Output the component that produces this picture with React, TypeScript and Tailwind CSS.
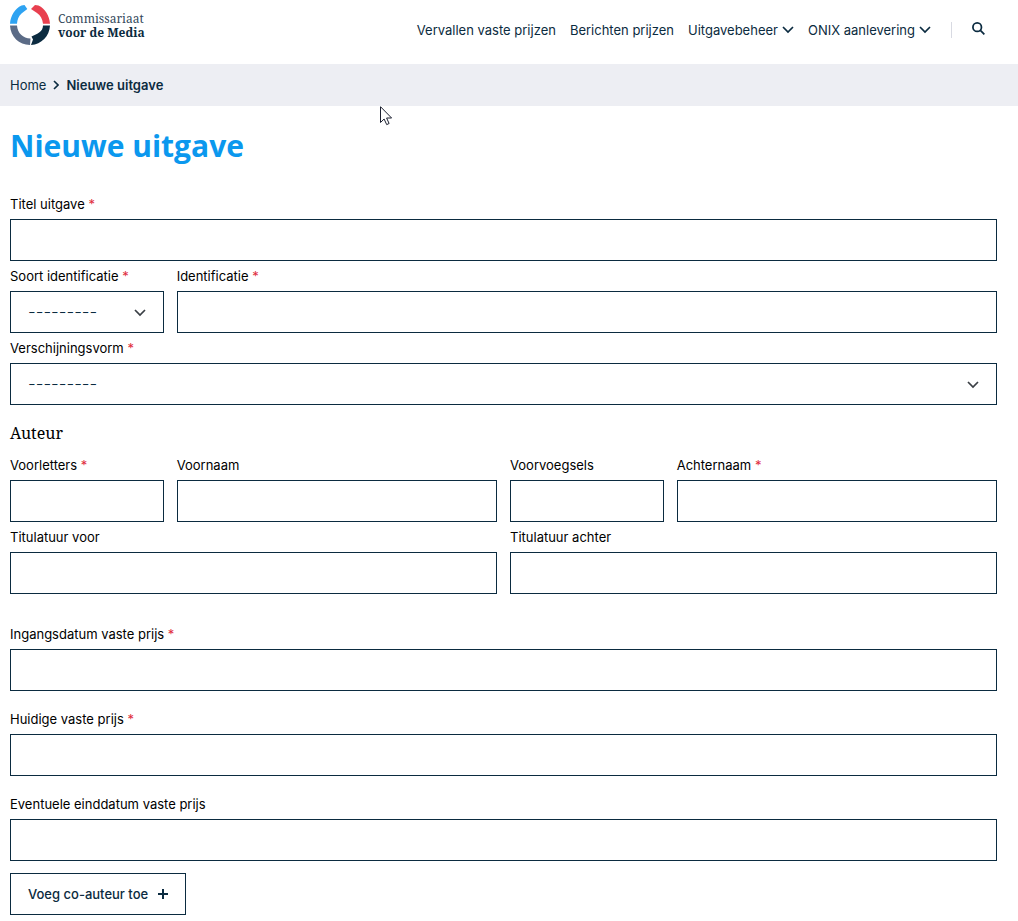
import type { ReactNode } from "react";

const controlClass =
  "block h-[42px] w-full appearance-none rounded-none border border-[#0b2b40] bg-white px-[17px] text-[#0b2b40] outline-none";

export default function App() {
  return (
    <div className="bg-white font-['Inter',sans-serif] text-[13px] leading-5 text-[#0b2b40]">
      <SiteHeader />
      <nav aria-label="Kruimelpad" className="flex h-[42px] items-center gap-[7px] bg-[#edeef3] px-[10px]">
        <a href="#home">Home</a>
        <svg width="6" height="10" viewBox="0 0 6 10" fill="none" stroke="currentColor" strokeWidth="1.6" aria-hidden="true">
          <path d="M1 1l4 4-4 4" />
        </svg>
        <span className="font-semibold" aria-current="page">
          Nieuwe uitgave
        </span>
      </nav>

      <main className="pr-[21px] pb-[6px] pl-[10px]">
        <h1 className="pt-5 font-['Open_Sans',sans-serif] text-[30px] leading-10 font-bold text-[#0b98ee]">
          Nieuwe uitgave
        </h1>

        <form className="pt-[23px]" onSubmit={(e) => e.preventDefault()}>
          <div className="grid grid-cols-6 gap-x-[13px]">
            <TextField id="titel" label="Titel uitgave" required className="col-span-6" />
            <SelectField id="soort" label="Soort identificatie" required className="col-span-1" />
            <TextField id="identificatie" label="Identificatie" required className="col-span-5" />
            <SelectField id="vorm" label="Verschijningsvorm" required className="col-span-6" />
          </div>

          <fieldset>
            <legend className="pt-4 pb-[5px] font-['Noto_Serif','DejaVu_Serif',serif] text-base leading-6 text-black">
              Auteur
            </legend>
            <div className="grid grid-cols-6 gap-x-[13px]">
              <TextField id="voorletters" label="Voorletters" required className="col-span-1" />
              <TextField id="voornaam" label="Voornaam" className="col-span-2" />
              <TextField id="voorvoegsels" label="Voorvoegsels" className="col-span-1" />
              <TextField id="achternaam" label="Achternaam" required className="col-span-2" />
              <TextField id="titulatuur-voor" label="Titulatuur voor" className="col-span-3" />
              <TextField id="titulatuur-achter" label="Titulatuur achter" className="col-span-3" />
            </div>
          </fieldset>

          <div className="flex flex-col gap-[13px] pt-[25px]">
            <TextField id="ingangsdatum" label="Ingangsdatum vaste prijs" required />
            <TextField id="prijs" label="Huidige vaste prijs" required />
            <TextField id="einddatum" label="Eventuele einddatum vaste prijs" />
          </div>

          <button
            type="button"
            className="mt-3 flex h-[42px] items-center gap-[10px] border border-[#0b2b40] px-[17px] font-medium"
          >
            Voeg co-auteur toe
            <svg width="10" height="10" viewBox="0 0 10 10" stroke="currentColor" strokeWidth="2" aria-hidden="true">
              <path d="M5 0v10M0 5h10" />
            </svg>
          </button>
        </form>
      </main>
      <Pointer />
    </div>
  );
}

function SiteHeader() {
  return (
    <header className="flex h-16 items-start justify-between pr-[33px] pl-[10px]">
      <a href="#home" className="flex items-center gap-2 pt-[5px]">
        <Logo />
        <span className="flex flex-col pt-px font-['Noto_Serif','DejaVu_Serif',serif] text-[12px] leading-[14px]">
          <span className="text-[#33495b]">Commissariaat</span>
          <b>voor de Media</b>
        </span>
      </a>
      <div className="flex items-center pt-5">
        <nav aria-label="Hoofdmenu" className="flex items-center gap-[14px]">
          <a href="#vervallen">Vervallen vaste prijzen</a>
          <a href="#berichten">Berichten prijzen</a>
          <a href="#beheer" className="flex items-center gap-1">
            Uitgavebeheer <Chevron />
          </a>
          <a href="#onix" className="flex items-center gap-1">
            ONIX aanlevering <Chevron />
          </a>
        </nav>
        <span className="ml-5 h-4 w-px bg-[#d8dae2]" />
        <button type="button" aria-label="Zoeken" className="ml-5 pb-1">
          <svg width="13" height="13" viewBox="0 0 14 14" fill="none" stroke="currentColor" strokeWidth="1.9" aria-hidden="true">
            <circle cx="5.6" cy="5.6" r="4.6" />
            <path d="M9 9l4.3 4.3" />
          </svg>
        </button>
      </div>
    </header>
  );
}

type FieldProps = { id: string; label: string; required?: boolean; className?: string };

function Field({ id, label, required, className, children }: FieldProps & { children: ReactNode }) {
  return (
    <div className={className}>
      <label htmlFor={id} className="block h-[30px] pt-[5px] whitespace-nowrap text-black">
        {label} {required && <span className="text-[#e02b3c]">*</span>}
      </label>
      {children}
    </div>
  );
}

function TextField(props: FieldProps) {
  return (
    <Field {...props}>
      <input id={props.id} type="text" className={controlClass} />
    </Field>
  );
}

function SelectField(props: FieldProps) {
  return (
    <Field {...props}>
      <div className="relative">
        <select id={props.id} className={`${controlClass} text-[17px] font-light`}>
          <option>---------</option>
        </select>
        <span className="pointer-events-none absolute top-[18px] right-[18px] text-[#3a3f45]">
          <Chevron />
        </span>
      </div>
    </Field>
  );
}

function Chevron() {
  return (
    <svg width="12" height="8" viewBox="0 0 12 8" fill="none" stroke="currentColor" strokeWidth="1.7" aria-hidden="true">
      <path d="M1 1l5 5 5-5" />
    </svg>
  );
}

function Logo() {
  return (
    <svg width="40" height="40" viewBox="0 0 40 40" aria-hidden="true">
      <path fill="#2ea3f2" d="M0 18.800C.5 10.500 5 3.500 11.500.4L14.500 0L17.300 4L11.500 8.500C8.800 11 7.200 14.500 7 18.800Z" />
      <path fill="#e8404f" d="M40 18.800C39.500 10.500 35 3.500 28.500.4L25 0L21 4L27 8C30.500 10.500 32.500 14 33 18.800Z" />
      <path fill="#5b6b86" d="M0 20.500H7C7.500 28 13 33.500 20.500 33.500L20 40C9 40 .5 31.500 0 20.500Z" />
      <path fill="#0b2b40" d="M40 20.500H33C33 26.500 27.500 29 21.500 31.500L23 34.500L21 39.900C31.500 39.500 39.500 31 40 20.500Z" />
    </svg>
  );
}

function Pointer() {
  return (
    <svg className="pointer-events-none absolute top-[106px] left-[380px]" width="13" height="20" viewBox="0 0 13 20" aria-hidden="true">
      <path d="M.5.7v15.800l3.600-3.500 2.600 5.600 2.400-1.100-2.500-5.500h5z" fill="#fff" stroke="#1c2030" />
    </svg>
  );
}
